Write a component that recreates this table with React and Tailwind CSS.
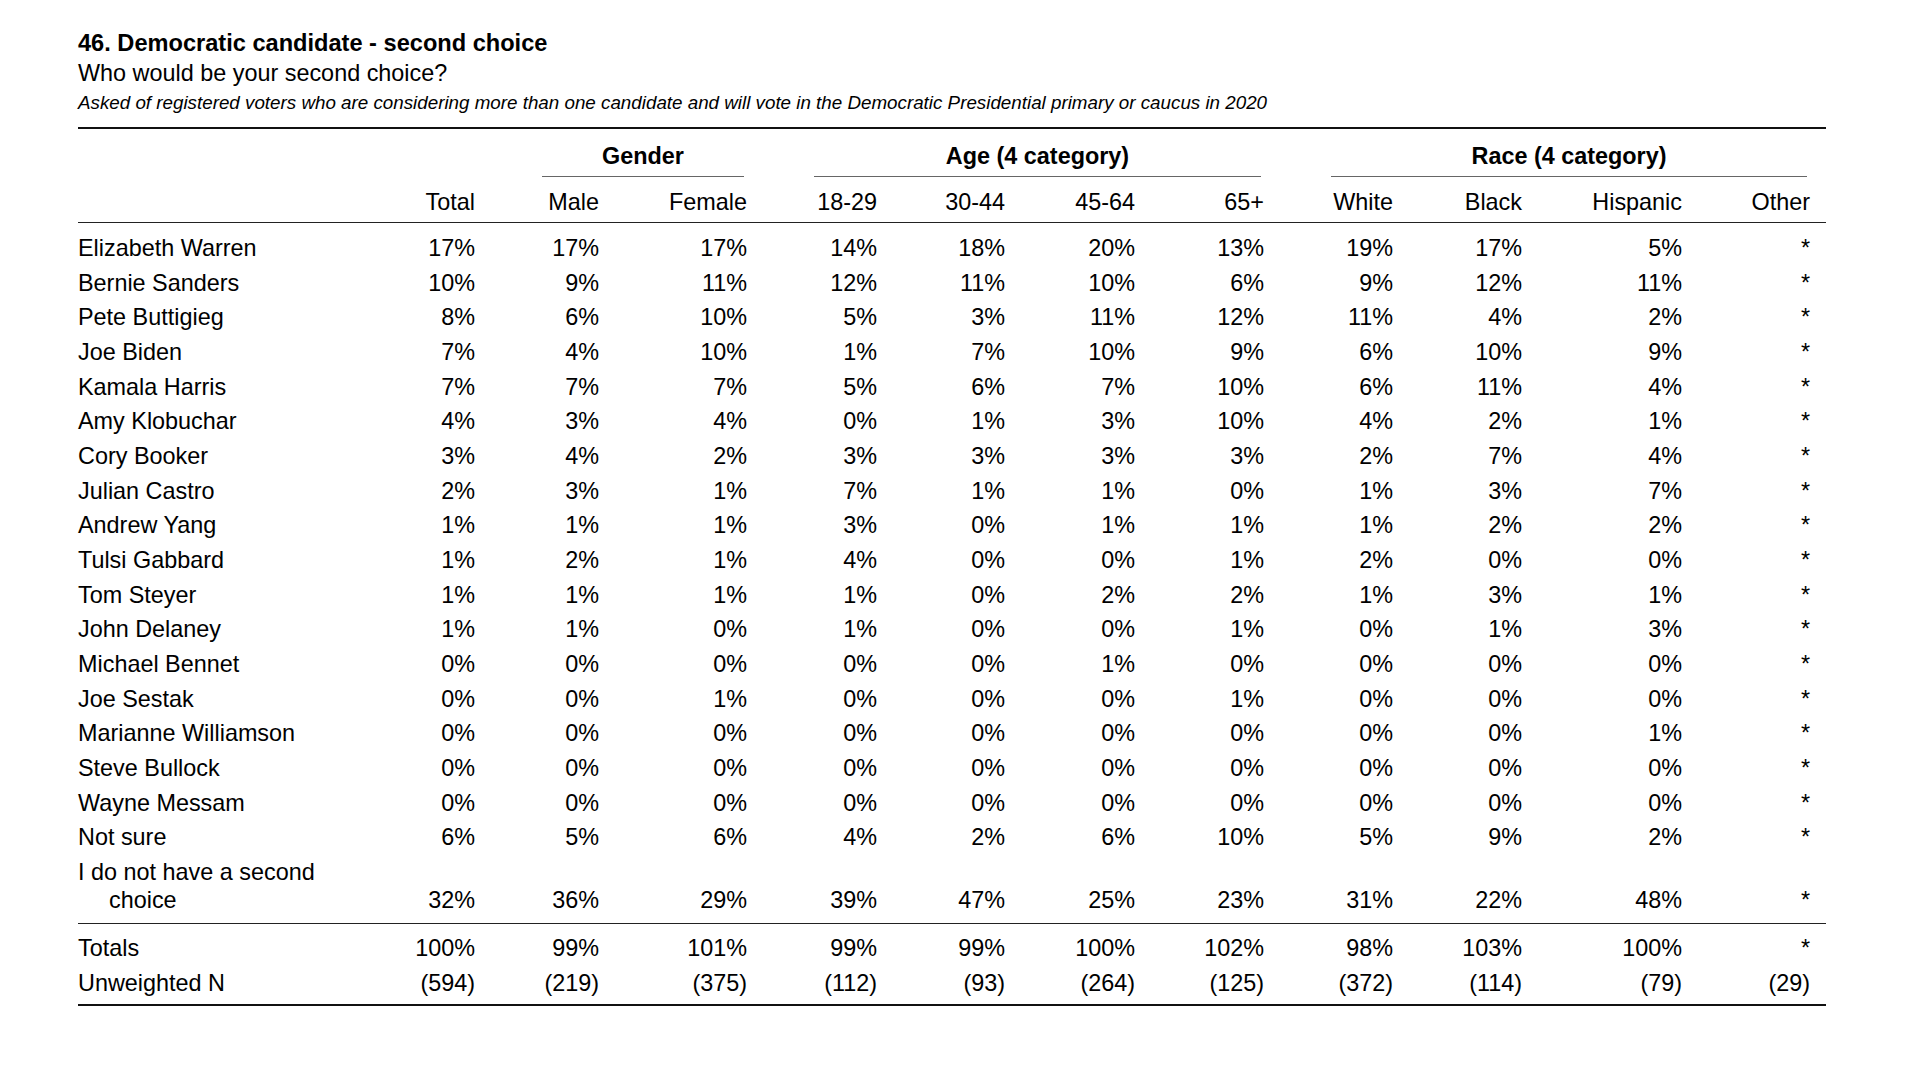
const rows = [
  ['Elizabeth Warren', '17%', '17%', '17%', '14%', '18%', '20%', '13%', '19%', '17%', '5%', '*'],
  ['Bernie Sanders', '10%', '9%', '11%', '12%', '11%', '10%', '6%', '9%', '12%', '11%', '*'],
  ['Pete Buttigieg', '8%', '6%', '10%', '5%', '3%', '11%', '12%', '11%', '4%', '2%', '*'],
  ['Joe Biden', '7%', '4%', '10%', '1%', '7%', '10%', '9%', '6%', '10%', '9%', '*'],
  ['Kamala Harris', '7%', '7%', '7%', '5%', '6%', '7%', '10%', '6%', '11%', '4%', '*'],
  ['Amy Klobuchar', '4%', '3%', '4%', '0%', '1%', '3%', '10%', '4%', '2%', '1%', '*'],
  ['Cory Booker', '3%', '4%', '2%', '3%', '3%', '3%', '3%', '2%', '7%', '4%', '*'],
  ['Julian Castro', '2%', '3%', '1%', '7%', '1%', '1%', '0%', '1%', '3%', '7%', '*'],
  ['Andrew Yang', '1%', '1%', '1%', '3%', '0%', '1%', '1%', '1%', '2%', '2%', '*'],
  ['Tulsi Gabbard', '1%', '2%', '1%', '4%', '0%', '0%', '1%', '2%', '0%', '0%', '*'],
  ['Tom Steyer', '1%', '1%', '1%', '1%', '0%', '2%', '2%', '1%', '3%', '1%', '*'],
  ['John Delaney', '1%', '1%', '0%', '1%', '0%', '0%', '1%', '0%', '1%', '3%', '*'],
  ['Michael Bennet', '0%', '0%', '0%', '0%', '0%', '1%', '0%', '0%', '0%', '0%', '*'],
  ['Joe Sestak', '0%', '0%', '1%', '0%', '0%', '0%', '1%', '0%', '0%', '0%', '*'],
  ['Marianne Williamson', '0%', '0%', '0%', '0%', '0%', '0%', '0%', '0%', '0%', '1%', '*'],
  ['Steve Bullock', '0%', '0%', '0%', '0%', '0%', '0%', '0%', '0%', '0%', '0%', '*'],
  ['Wayne Messam', '0%', '0%', '0%', '0%', '0%', '0%', '0%', '0%', '0%', '0%', '*'],
  ['Not sure', '6%', '5%', '6%', '4%', '2%', '6%', '10%', '5%', '9%', '2%', '*'],
];

const noChoice = ['32%', '36%', '29%', '39%', '47%', '25%', '23%', '31%', '22%', '48%', '*'];
const totals = ['Totals', '100%', '99%', '101%', '99%', '99%', '100%', '102%', '98%', '103%', '100%', '*'];
const unweighted = ['Unweighted N', '(594)', '(219)', '(375)', '(112)', '(93)', '(264)', '(125)', '(372)', '(114)', '(79)', '(29)'];

const headers = ['Total', 'Male', 'Female', '18-29', '30-44', '45-64', '65+', 'White', 'Black', 'Hispanic', 'Other'];

const grid =
  'grid grid-cols-[317px_80px_124px_148px_130px_128px_130px_129px_129px_129px_160px_128px]';

function Row({ cells }) {
  return (
    <div className={`${grid} py-[3px] leading-[28.65px]`}>
      {cells.map((c, i) => (
        <div key={i} className={i === 0 ? 'text-left whitespace-nowrap' : 'text-right'}>
          {c}
        </div>
      ))}
    </div>
  );
}

function GroupHead({ label, span }) {
  return (
    <div className={span}>
      <div className="ml-[67px] mr-[3px] border-b border-[#666] pb-[5px] text-center font-bold leading-[29px]">
        {label}
      </div>
    </div>
  );
}

export default function App() {
  return (
    <div className="min-h-screen bg-white pl-[78px] pt-[28px] text-black font-['Liberation_Sans',Arial,sans-serif] text-[23.4px]">
      <div className="w-[1748px]">
        {/* Title block */}
        <div className="leading-[30px]">
          <h1 className="font-bold text-[23.6px]">46. Democratic candidate - second choice</h1>
          <p>Who would be your second choice?</p>
          <p className="text-[18.8px] italic">
            Asked of registered voters who are considering more than one candidate and will vote in the Democratic Presidential primary or caucus in 2020
          </p>
        </div>

        {/* Table */}
        <div className="mt-[9px] border-t-2 border-[#111]">
          <div className={`${grid} pt-[12.5px]`}>
            <div className="col-span-2" />
            <GroupHead label="Gender" span="col-span-2" />
            <GroupHead label="Age (4 category)" span="col-span-4" />
            <GroupHead label="Race (4 category)" span="col-span-4" />
          </div>

          <div className={`${grid} border-b-[1.5px] border-[#222] pt-[11px] pb-[5.5px] leading-[29px]`}>
            <div />
            {headers.map((h) => (
              <div key={h} className="text-right">
                {h}
              </div>
            ))}
          </div>

          <div className="pt-[8px] pb-[5px] border-b-[1.5px] border-[#222]">
            {rows.map((r) => (
              <Row key={r[0]} cells={r} />
            ))}
            <div className={`${grid} py-[3px] leading-[28.65px]`}>
              <div className="whitespace-nowrap">
                <div>I do not have a second</div>
                <div className="pl-[31px]">choice</div>
              </div>
              {noChoice.map((c, i) => (
                <div key={i} className="self-end text-right">
                  {c}
                </div>
              ))}
            </div>
          </div>

          <div className="pt-[7px] pb-[4px] border-b-2 border-[#111]">
            <Row cells={totals} />
            <Row cells={unweighted} />
          </div>
        </div>
      </div>
    </div>
  );
}
